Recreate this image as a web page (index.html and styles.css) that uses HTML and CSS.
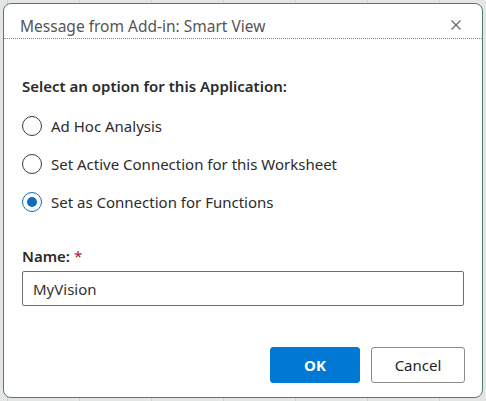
FILE: index.html
```html
<!DOCTYPE html>
<html lang="en">
<head>
<meta charset="utf-8">
<title>Message from Add-in: Smart View</title>
<link rel="stylesheet" href="styles.css">
</head>
<body>
<div class="dialog">
  <div class="titlebar">
    <span class="title">Message from Add-in: Smart View</span>
    <button class="close" aria-label="Close">
      <svg width="10" height="10" viewBox="0 0 10 10"><path d="M0.5 0.5 L9.5 9.5 M9.5 0.5 L0.5 9.5" stroke="#6a6a6a" stroke-width="1.3" fill="none"/></svg>
    </button>
  </div>
  <div class="content">
    <div class="heading">Select an option for this Application:</div>
    <div class="options">
      <label class="option"><span class="radio"></span><span>Ad Hoc Analysis</span></label>
      <label class="option"><span class="radio"></span><span>Set Active Connection for this Worksheet</span></label>
      <label class="option"><span class="radio checked"></span><span>Set as Connection for Functions</span></label>
    </div>
    <div class="field-label">Name: <span class="req">*</span></div>
    <div class="input">MyVision</div>
  </div>
  <div class="footer">
    <button class="btn primary">OK</button>
    <button class="btn secondary">Cancel</button>
  </div>
</div>
</body>
</html>
```
FILE: styles.css
```css
html, body {
  margin: 0;
  height: 100%;
}
body {
  background-color: #e4e6e5;
  background-image: repeating-linear-gradient(to right, transparent 0 7px, #d0d2d1 7px 8px, transparent 8px 72px);
  padding: 3px;
  box-sizing: border-box;
  font-family: "Noto Sans", "Open Sans", sans-serif;
  color: #242424;
}
.dialog {
  width: 480px;
  height: 395px;
  box-sizing: border-box;
  background: #ffffff;
  border: 1px solid #4f7f66;
  border-radius: 8px;
  display: flex;
  flex-direction: column;
}
.titlebar {
  height: 35px;
  border-bottom: 1px dotted #8a8a8a;
  display: flex;
  align-items: center;
  justify-content: space-between;
  padding: 10px 19px 0 16px;
  box-sizing: border-box;
}
.title {
  font-size: 15.5px;
  line-height: 24px;
  color: #555555;
}
.close {
  border: none;
  background: none;
  padding: 0;
  width: 14px;
  height: 14px;
  display: flex;
  align-items: center;
  justify-content: center;
  margin-top: -2px;
}
.content {
  padding: 0 18px;
  flex: 1;
}
.heading {
  font-size: 15px;
  font-weight: 600;
  margin-top: 37px;
  line-height: 20px;
  color: #2b2b2b;
}
.options {
  display: flex;
  flex-direction: column;
  gap: 18px;
  margin-top: 20px;
}
.option {
  display: flex;
  align-items: center;
  gap: 9px;
  font-size: 15px;
  line-height: 20px;
  color: #2b2b2b;
}
.radio {
  width: 20px;
  height: 20px;
  box-sizing: border-box;
  border: 1px solid #3a3a3a;
  border-radius: 50%;
  display: flex;
  align-items: center;
  justify-content: center;
  flex: none;
}
.radio.checked {
  border-color: #0f6cbd;
}
.radio.checked::after {
  content: "";
  width: 10px;
  height: 10px;
  border-radius: 50%;
  background: #0f6cbd;
}
.field-label {
  margin-top: 34px;
  font-size: 15px;
  font-weight: 600;
  line-height: 20px;
  color: #2b2b2b;
}
.req {
  color: #b10e1c;
  font-weight: 400;
}
.input {
  margin-top: 5px;
  height: 35px;
  box-sizing: border-box;
  border: 1px solid #707070;
  border-radius: 2px;
  padding: 0 10px;
  display: flex;
  align-items: center;
  font-size: 15px;
  color: #333333;
}
.footer {
  display: flex;
  justify-content: flex-end;
  gap: 11px;
  padding: 0 17px 14px 0;
}
.btn {
  height: 36px;
  border-radius: 3px;
  font-family: "Noto Sans", "Open Sans", sans-serif;
  font-size: 15px;
}
.primary {
  width: 90px;
  background: #0078d4;
  border: 1px solid #0078d4;
  color: #ffffff;
  font-weight: 700;
}
.secondary {
  width: 94px;
  background: #ffffff;
  border: 1px solid #8a8a8a;
  color: #242424;
}
```
